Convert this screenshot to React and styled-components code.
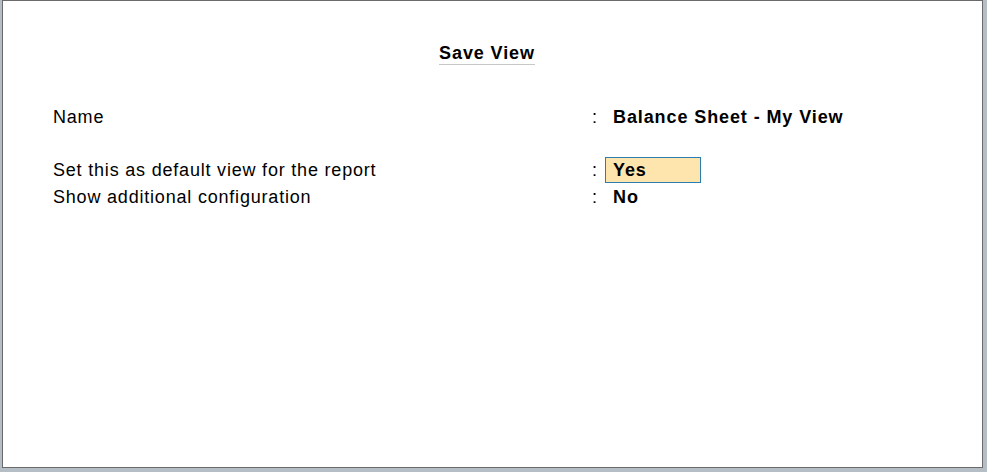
import styled, { css, createGlobalStyle } from 'styled-components';

const GlobalStyle = createGlobalStyle`
	html, body {
		margin: 0;
		padding: 0;
		background-color: #b6bec5;
	}
	#root {
		font-family: 'Liberation Sans', Arial, sans-serif;
		color: #000;
	}
`;

const Frame = styled.div`
	width: 987px;
	height: 472px;
	box-sizing: border-box;
	padding: 0 4px 4px 2px;
	background-color: #b6bec5;
`;

const Panel = styled.div`
	height: 100%;
	box-sizing: border-box;
	background-color: #fff;
	border: 1px solid #6a6a6a;
	padding: 42px 0 0 50px;
`;

const Header = styled.div`
	display: flex;
	justify-content: center;
	padding-right: 61px;
`;

const Title = styled.h1`
	margin: 0;
	font-size: 18px;
	font-weight: 700;
	line-height: 20px;
	letter-spacing: 0.9px;
	padding-bottom: 1px;
	border-bottom: 1px solid #c8c8c8;
`;

const Form = styled.div`
	margin-top: 39px;
	display: flex;
	flex-direction: column;
`;

const Row = styled.div`
	display: grid;
	grid-template-columns: 539px 13px auto;
	align-items: start;
	height: 27px;
	margin-bottom: ${(props) => (props.spaced ? '26px' : '0')};
	font-size: 18px;
	line-height: 27px;
`;

const Label = styled.span`
	letter-spacing: 0.8px;
`;

const Colon = styled.span``;

const Value = styled.span`
	justify-self: start;
	box-sizing: border-box;
	padding: 0 8px;
	font-weight: 700;
	letter-spacing: 0.9px;

	${(props) =>
		props.active &&
		css`
			width: 96px;
			height: 26px;
			padding: 1px 7px 0;
			line-height: 23px;
			border: 1px solid #2a7db0;
			background-color: #fde5ad;
		`}
`;

const fields = [
	{ label: 'Name', value: 'Balance Sheet - My View', spaced: true },
	{ label: 'Set this as default view for the report', value: 'Yes', active: true },
	{ label: 'Show additional configuration', value: 'No' },
];

const App = () => {
	return (
		<>
			<GlobalStyle />
			<Frame>
				<Panel>
					<Header>
						<Title>Save View</Title>
					</Header>
					<Form>
						{fields.map((f) => (
							<Row key={f.label} spaced={f.spaced}>
								<Label>{f.label}</Label>
								<Colon>:</Colon>
								<Value active={f.active}>{f.value}</Value>
							</Row>
						))}
					</Form>
				</Panel>
			</Frame>
		</>
	);
};

export default App;
